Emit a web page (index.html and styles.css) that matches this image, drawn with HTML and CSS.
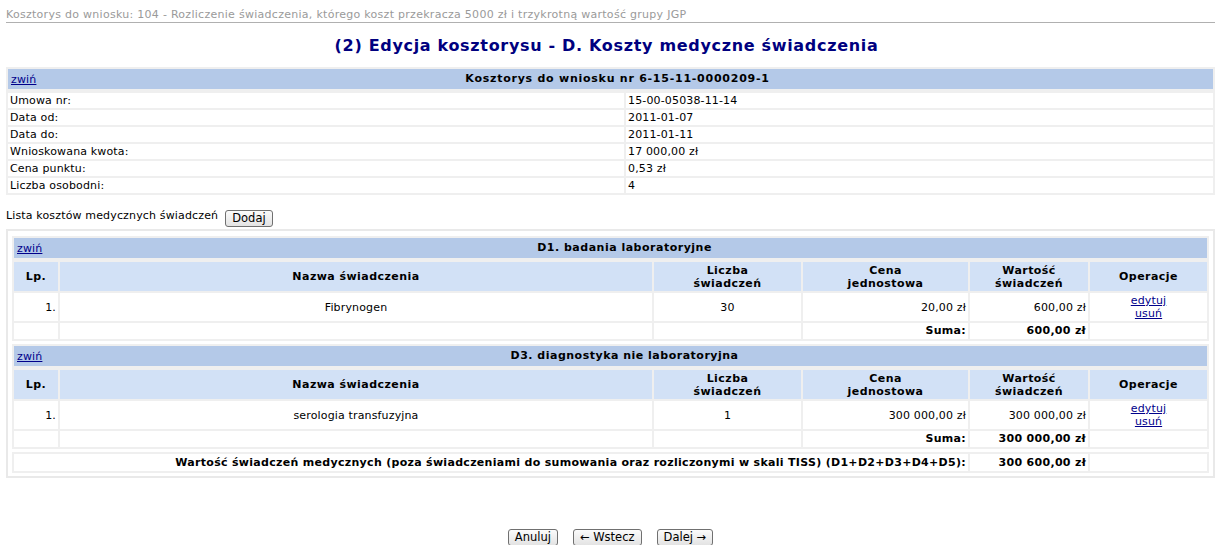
FILE: index.html
```html
<!DOCTYPE html>
<html lang="pl">
<head>
<meta charset="utf-8">
<title>Edycja kosztorysu</title>
<link rel="stylesheet" href="styles.css">
</head>
<body>
<div class="page">
  <div class="crumb">Kosztorys do wniosku: 104 - Rozliczenie świadczenia, którego koszt przekracza 5000 zł i trzykrotną wartość grupy JGP</div>
  <h1 class="title">(2) Edycja kosztorysu - D. Koszty medyczne świadczenia</h1>

  <table class="info">
    <colgroup><col class="info-c1"><col></colgroup>
    <thead>
      <tr><th colspan="2" class="band"><a href="#" class="toggle">zwiń</a><span class="band-title band-title-info">Kosztorys do wniosku nr 6-15-11-0000209-1</span></th></tr>
    </thead>
    <tbody>
      <tr><td>Umowa nr:</td><td>15-00-05038-11-14</td></tr>
      <tr><td>Data od:</td><td>2011-01-07</td></tr>
      <tr><td>Data do:</td><td>2011-01-11</td></tr>
      <tr><td>Wnioskowana kwota:</td><td>17 000,00 zł</td></tr>
      <tr><td>Cena punktu:</td><td>0,53 zł</td></tr>
      <tr><td>Liczba osobodni:</td><td>4</td></tr>
    </tbody>
  </table>

  <div class="list-bar">
    <span class="list-label">Lista kosztów medycznych świadczeń</span>
    <button class="btn">Dodaj</button>
  </div>

  <div class="costs">
    <table class="grid">
      <colgroup><col class="c-lp"><col class="c-name"><col class="c-qty"><col class="c-price"><col class="c-val"><col class="c-op"></colgroup>
      <thead>
        <tr><th colspan="6" class="band"><a href="#" class="toggle">zwiń</a><span class="band-title">D1. badania laboratoryjne</span></th></tr>
        <tr class="cols">
          <th>Lp.</th><th>Nazwa świadczenia</th><th>Liczba<br>świadczeń</th><th>Cena<br>jednostowa</th><th>Wartość<br>świadczeń</th><th>Operacje</th>
        </tr>
      </thead>
      <tbody>
        <tr class="item">
          <td class="r">1.</td><td class="c">Fibrynogen</td><td class="c">30</td><td class="r">20,00 zł</td><td class="r">600,00 zł</td>
          <td class="c ops"><a href="#">edytuj</a><br><a href="#">usuń</a></td>
        </tr>
        <tr class="sum">
          <td></td><td></td><td></td><td class="r b">Suma:</td><td class="r b">600,00 zł</td><td></td>
        </tr>
      </tbody>
    </table>

    <table class="grid">
      <colgroup><col class="c-lp"><col class="c-name"><col class="c-qty"><col class="c-price"><col class="c-val"><col class="c-op"></colgroup>
      <thead>
        <tr><th colspan="6" class="band"><a href="#" class="toggle">zwiń</a><span class="band-title">D3. diagnostyka nie laboratoryjna</span></th></tr>
        <tr class="cols">
          <th>Lp.</th><th>Nazwa świadczenia</th><th>Liczba<br>świadczeń</th><th>Cena<br>jednostowa</th><th>Wartość<br>świadczeń</th><th>Operacje</th>
        </tr>
      </thead>
      <tbody>
        <tr class="item">
          <td class="r">1.</td><td class="c">serologia transfuzyjna</td><td class="c">1</td><td class="r">300 000,00 zł</td><td class="r">300 000,00 zł</td>
          <td class="c ops"><a href="#">edytuj</a><br><a href="#">usuń</a></td>
        </tr>
        <tr class="sum">
          <td></td><td></td><td></td><td class="r b">Suma:</td><td class="r b">300 000,00 zł</td><td></td>
        </tr>
      </tbody>
    </table>

    <table class="grid total">
      <colgroup><col class="c-lp"><col class="c-name"><col class="c-qty"><col class="c-price"><col class="c-val"><col class="c-op"></colgroup>
      <tbody>
        <tr class="sum">
          <td colspan="4" class="r b total-label">Wartość świadczeń medycznych (poza świadczeniami do sumowania oraz rozliczonymi w skali TISS) (D1+D2+D3+D4+D5):</td>
          <td class="r b">300 600,00 zł</td><td></td>
        </tr>
      </tbody>
    </table>
  </div>

  <div class="actions">
    <button class="btn">Anuluj</button>
    <button class="btn">← Wstecz</button>
    <button class="btn">Dalej →</button>
  </div>
</div>
</body>
</html>
```
FILE: styles.css
```css
html, body {
  margin: 0;
  padding: 0;
  background: #ffffff;
}
body {
  font-family: "DejaVu Sans", Verdana, sans-serif;
  font-size: 11px;
  letter-spacing: 0.15px;
  color: #000000;
}
.page {
  padding: 0 6px;
}
.crumb {
  padding-top: 8px;
  line-height: 14px;
  color: #9a9a9a;
  letter-spacing: 0.28px;
  border-bottom: 1px solid #b0b0b0;
  white-space: nowrap;
}
.title {
  margin: 13px 0 11px;
  font-size: 16px;
  line-height: 20px;
  font-weight: bold;
  letter-spacing: 0.68px;
  color: #00007f;
  text-align: center;
  padding-right: 8px;
}
a {
  color: #00008b;
  text-decoration: underline;
}

/* header band */
.band {
  background: #b4c9e8;
  height: 20px;
  padding: 0 3px;
  text-align: left;
  font-weight: normal;
  position: relative;
  white-space: nowrap;
}
.band-title {
  position: absolute;
  left: 0;
  right: 0;
  top: 3px;
  padding-left: 28px;
  text-align: center;
  font-weight: bold;
  letter-spacing: 0.5px;
  pointer-events: none;
}
.band-title-info {
  padding-left: 14px;
  letter-spacing: 0.75px;
}
.toggle {
  position: relative;
  z-index: 1;
}

/* info table */
.info {
  width: 100%;
  table-layout: fixed;
  border-collapse: separate;
  border-spacing: 2px;
  background: #efefef;
}
.info-c1 {
  width: 616px;
}
.info thead .band {
  border-bottom: 2px solid #efefef;
}
.info td {
  background: #ffffff;
  height: 15px;
  padding: 0 2px;
  line-height: 14px;
  vertical-align: middle;
}

/* list bar */
.list-bar {
  display: flex;
  align-items: flex-start;
  gap: 7px;
  margin-top: 14px;
  height: 18px;
}
.list-label {
  line-height: 13px;
}
.btn {
  font-family: "DejaVu Sans", Tahoma, sans-serif;
  font-size: 11.5px;
  letter-spacing: 0;
  height: 17px;
  line-height: 13px;
  padding: 0 6px;
  margin: 0;
  color: #000;
  background: linear-gradient(#fbfbfb, #e3e3e3);
  border: 1px solid #707070;
  border-radius: 3px;
}
.list-bar .btn {
  margin-top: 1px;
}

/* costs wrapper */
.costs {
  margin-top: 2px;
  border: 2px solid #e9e9e9;
  padding: 5px 4px 3px;
  background: #ffffff;
}
.grid {
  width: 100%;
  table-layout: fixed;
  border-collapse: separate;
  border-spacing: 2px;
  background: #efefef;
}
.grid + .grid {
  margin-top: 3px;
}
.c-lp { width: 44px; }
.c-name { width: 592px; }
.c-qty { width: 147px; }
.c-price { width: 165px; }
.c-val { width: 118px; }
.c-op { width: 117px; }

.grid thead .band {
  border-bottom: 2px solid #efefef;
}
.cols th {
  background: #d2e1f6;
  height: 29px;
  padding: 0 2px;
  font-weight: bold;
  letter-spacing: 0.45px;
  line-height: 13px;
  text-align: center;
  vertical-align: middle;
}
.grid td {
  background: #ffffff;
  padding: 0 2px;
  vertical-align: middle;
  line-height: 13px;
  white-space: nowrap;
}
.item td {
  height: 28px;
}
.sum td {
  height: 16px;
  line-height: 14px;
}
.total td {
  height: 17px;
}
.r { text-align: right; }
.c { text-align: center; }
.b {
  font-weight: bold;
  letter-spacing: 0.3px;
}
.total-label {
  letter-spacing: 0.3px;
}
.ops {
  line-height: 13px;
}

/* bottom actions */
.actions {
  display: flex;
  justify-content: center;
  gap: 15px;
  margin-top: 51px;
}
```
